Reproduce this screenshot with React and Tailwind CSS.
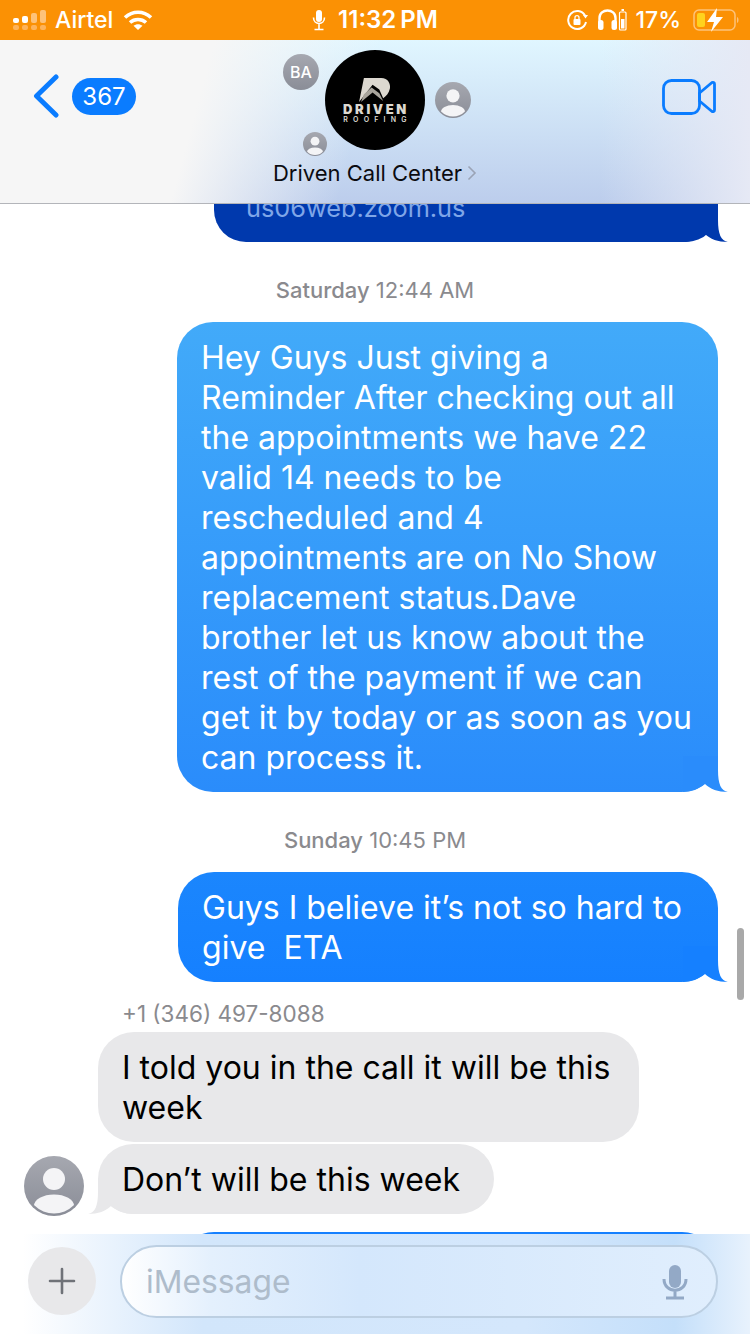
import React from 'react';

const outgoing = [
  'Hey Guys Just giving a',
  'Reminder After checking out all',
  'the appointments we have 22',
  'valid 14 needs to be',
  'rescheduled and 4',
  'appointments are on No Show',
  'replacement status.Dave',
  'brother let us know about the',
  'rest of the payment if we can',
  'get it by today or as soon as you',
  'can process it.',
];

const Tail = ({ fill, side = 'right' }) => (
  <svg
    width="45"
    height="36"
    viewBox="0 0 45 36"
    className={side === 'right' ? 'absolute -right-[10px] bottom-0' : 'absolute -left-[10px] bottom-0 -scale-x-100'}
  >
    <path d="M0 36C8 36 16 33 22 28C27 33 35 36 45 36C38 35 35 28 35 14V0H0Z" fill={fill} />
  </svg>
);

const Avatar = ({ size, id }) => (
  <svg width={size} height={size} viewBox="0 0 60 60" className="block">
    <defs>
      <linearGradient id={id} x1="0" y1="0" x2="0" y2="1">
        <stop offset="0" stopColor="#a6a8b0" />
        <stop offset="1" stopColor="#8a8d97" />
      </linearGradient>
      <clipPath id={`${id}-clip`}>
        <circle cx="30" cy="30" r="27.5" />
      </clipPath>
    </defs>
    <circle cx="30" cy="30" r="30" fill={`url(#${id})`} />
    <circle cx="30" cy="23" r="11" fill="#f4f4f6" />
    <ellipse cx="30" cy="50" rx="20" ry="11.5" fill="#f4f4f6" clipPath={`url(#${id}-clip)`} />
  </svg>
);

const Stamp = ({ day, time, className }) => (
  <div className={`h-[30px] self-center text-[22px] leading-[30px] text-[#8a8a8e] ${className}`}>
    <span className="font-medium">{day}</span> {time}
  </div>
);

const StatusBar = () => (
  <div className="h-[40px] shrink-0 grid grid-cols-3 items-center bg-[#fb9104] text-white text-[23px] font-medium">
    <div className="flex items-center pl-[13px]">
      <svg width="34" height="20" viewBox="0 0 34 20">
        <rect x="0" y="8" width="6" height="5" rx="2" fill="#fff" />
        <rect x="9" y="6" width="6" height="7" rx="2" fill="#fff" />
        <rect x="18" y="3" width="6" height="10" rx="2" fill="#fdc27a" />
        <rect x="27" y="0" width="6" height="13" rx="2" fill="#fdc27a" />
        <rect x="0" y="15" width="6" height="5" rx="2" fill="#fdb35b" />
        <rect x="9" y="15" width="6" height="5" rx="2" fill="#fdb35b" />
        <rect x="18" y="15" width="6" height="5" rx="2" fill="#fdb35b" />
        <rect x="27" y="15" width="6" height="5" rx="2" fill="#fdb35b" />
      </svg>
      <span className="ml-[8px]">Airtel</span>
      <svg width="30" height="22" viewBox="0 0 30 22" className="ml-[10px]" fill="none" stroke="#fff" strokeWidth="3.6">
        <path d="M2 8.500C9.500 1.500 20.500 1.500 28 8.500" />
        <path d="M7 13.500C11.500 9.500 18.500 9.500 23 13.500" />
        <path d="M15 21L10.500 16.800C13 14.600 17 14.600 19.500 16.800Z" fill="#fff" stroke="none" />
      </svg>
    </div>
    <div className="flex items-center justify-center">
      <svg width="14" height="22" viewBox="0 0 14 22" fill="none" stroke="#fff" strokeWidth="1.600" className="mr-[12px]">
        <rect x="4" y="1" width="6" height="12" rx="3" fill="#fff" stroke="none" />
        <path d="M1.500 8.500C1.500 16.500 12.500 16.500 12.500 8.500M7 15V20M2.500 20.500H11.500" />
      </svg>
      <span className="text-[24px] font-semibold [word-spacing:-2px]">11:32 PM</span>
    </div>
    <div className="flex items-center justify-end pr-[11px]">
      <svg width="24" height="22" viewBox="0 0 24 22" fill="none" stroke="#fff" strokeWidth="2">
        <path d="M19 6.500A9 9 0 1 0 20 13" />
        <path d="M17 6H22L19.500 9.500Z" fill="#fff" stroke="none" />
        <rect x="7.500" y="10" width="7" height="6" rx="1" fill="#fff" stroke="none" />
        <path d="M9 10V8.500C9 6 13 6 13 8.500V10" strokeWidth="1.300" />
      </svg>
      <svg width="30" height="24" viewBox="0 0 30 24" fill="none" stroke="#fff" strokeWidth="2.400" className="ml-[7px]">
        <path d="M2.500 17V10C2.500 0 18.500 0 18.500 10V17" />
        <rect x="1" y="12" width="5.500" height="10" rx="2.500" fill="#fff" stroke="none" />
        <rect x="14.500" y="12" width="5.500" height="10" rx="2.500" fill="#fff" stroke="none" />
        <rect x="22.500" y="4" width="6.500" height="18" rx="1" strokeWidth="1.200" />
        <rect x="24" y="11" width="3.500" height="9.500" fill="#fff" stroke="none" />
        <rect x="24.500" y="1" width="2.500" height="2" fill="#fff" stroke="none" />
      </svg>
      <span className="ml-[8px] mr-[12px]">17%</span>
      <svg width="46" height="24" viewBox="0 0 46 24" fill="none">
        <rect x="1" y="2" width="41" height="20" rx="5" stroke="#fdc27a" strokeWidth="1.500" />
        <rect x="4" y="5" width="8" height="14" rx="2" fill="#ffd21e" />
        <path d="M44 9V15C46 14.500 46 9.500 44 9Z" fill="#fdc27a" />
        <path d="M24 0L14 14H21L18 24L30 9H23Z" fill="#fff" />
      </svg>
    </div>
  </div>
);

const Header = () => (
  <div className="h-[164px] shrink-0 grid grid-cols-[1fr_240px_1fr] border-b border-[#b3b5ba] bg-[linear-gradient(105deg,#f6f6f6_0%,#f6f6f6_27%,transparent_48%),linear-gradient(90deg,transparent_80%,#e6e9f5_100%),linear-gradient(180deg,#e0f6ff_0%,#bccdec_100%)]">
    <div className="flex items-start pl-[33px] pt-[34px]">
      <svg width="27" height="44" viewBox="0 0 27 44" fill="none" stroke="#0a7cff" strokeWidth="5" strokeLinecap="round" strokeLinejoin="round">
        <path d="M23 3L3.500 22L23 41" />
      </svg>
      <div className="ml-[12px] mt-[4px] w-[64px] h-[37px] rounded-full bg-[#0a7cff] text-white text-[24px] leading-[37px] text-center">367</div>
    </div>

    <div className="relative flex flex-col items-center pt-[10px]">
      <div className="w-[100px] h-[100px] rounded-full bg-black flex flex-col items-center text-[#dcd8d0]">
        <svg width="33" height="26" viewBox="0 0 34 27" className="mt-[27px] -ml-[2px]">
          <path d="M6 1H24C31 1 34 7 33 12C32 17 29 20 26 22L22 13L15 8L1 26Z" fill="#dcd8d0" />
          <path d="M6 18L14 11L22 17L26 25L15 16L3 26Z" fill="#a8a49c" />
        </svg>
        <div className="text-[13px] leading-[13px] font-black tracking-[2.6px] pl-[2px]">DRIVEN</div>
        <div className="text-[7px] leading-[8px] font-semibold tracking-[5.2px] pl-[5px]">ROOFING</div>
      </div>
      <div className="absolute left-[28px] top-[14px] w-[36px] h-[36px] rounded-full bg-gradient-to-b from-[#a6a8b0] to-[#8a8d97] text-white text-[16px] leading-[36px] text-center font-medium">BA</div>
      <div className="absolute left-[180px] top-[42px]"><Avatar size={36} id="avatar-right" /></div>
      <div className="absolute left-[48px] top-[92px]"><Avatar size={24} id="avatar-small" /></div>
      <div className="mt-[8px] flex items-center text-[22px] leading-[30px] text-[#0b0b10]">
        Driven Call Center
        <svg width="10" height="16" viewBox="0 0 10 16" fill="none" stroke="#9aa3b5" strokeWidth="1.600" className="ml-[5px]">
          <path d="M1.500 1.500L8 8L1.500 14.500" />
        </svg>
      </div>
    </div>

    <div className="flex justify-end pt-[39px] pr-[34px]">
      <svg width="54" height="36" viewBox="0 0 54 36" fill="none" stroke="#0a7cff" strokeWidth="2.800" strokeLinejoin="round">
        <rect x="1.500" y="1.500" width="36" height="33" rx="8" />
        <path d="M37.500 14L50 3.500C51 3 52.500 3.500 52.500 5V31C52.500 32.500 51 33 50 32.500L37.500 22Z" />
      </svg>
    </div>
  </div>
);

const Thread = () => (
  <div className="relative flex-1 min-h-0 overflow-hidden bg-white flex flex-col">
    <div className="relative self-end mr-[32px] w-[504px] h-[38px] shrink-0 bg-[#0039ad] rounded-b-[32px]">
      <div className="absolute left-[32px] -top-[13px] text-[25.3px] leading-[34px] text-[#7fa6e8]">us06web.zoom.us</div>
      <Tail fill="#0039ad" />
    </div>

    <Stamp day="Saturday" time="12:44 AM" className="mt-[33px]" />

    <div className="relative self-end mr-[32px] mt-[17px] w-[541px] shrink-0 rounded-[36px] bg-gradient-to-b from-[#42aaf9] to-[#2a8cfb] pl-[24px] pr-[25px] pt-[16px] pb-[14px] text-white text-[32px] leading-[40px] whitespace-nowrap">
      {outgoing.map((line) => (
        <div key={line} className="relative z-10">{line}</div>
      ))}
      <Tail fill="#2a8cfb" />
    </div>

    <Stamp day="Sunday" time="10:45 PM" className="mt-[33px]" />

    <div className="relative self-end mr-[32px] mt-[17px] w-[540px] shrink-0 rounded-[36px] bg-gradient-to-b from-[#1b86fd] to-[#1580ff] pl-[24px] pr-[25px] pt-[16px] pb-[14px] text-white text-[32px] leading-[40px] whitespace-pre">
      <div className="relative z-10">Guys I believe it’s not so hard to</div>
      <div className="relative z-10">give  ETA</div>
      <Tail fill="#1580ff" />
    </div>

    <div className="mt-[17px] ml-[122px] h-[30px] text-[22.5px] leading-[30px] text-[#8a8a8e]">+1 (346) 497-8088</div>

    <div className="mt-[3px] ml-[98px] w-[541px] shrink-0 rounded-[36px] bg-[#e8e8ea] pl-[24px] pr-[25px] pt-[16px] pb-[14px] text-black text-[32px] leading-[40px]">
      <div className="whitespace-nowrap">I told you in the call it will be this</div>
      <div>week</div>
    </div>

    <div className="mt-[2px] ml-[24px] flex items-end gap-[14px] shrink-0">
      <div className="-mb-[2px]"><Avatar size={60} id="avatar-sender" /></div>
      <div className="relative w-[396px] rounded-[35px] bg-[#e8e8ea] pl-[24px] pt-[16px] pb-[14px] text-black text-[32px] leading-[40px] whitespace-nowrap">
        <span className="relative z-10">Don’t will be this week</span>
        <Tail fill="#e8e8ea" side="left" />
      </div>
    </div>

    <div className="self-end mt-[18px] mr-[32px] w-[540px] h-[40px] shrink-0 rounded-t-[36px] bg-[#1580ff]" />

    {/* scroll indicator */}
    <div className="absolute right-[6px] top-[724px] w-[7px] h-[72px] rounded-full bg-[#a9a9a9]" />
  </div>
);

const Composer = () => (
  <div className="relative h-[100px] shrink-0 flex items-start pl-[28px] pt-[11px] bg-[linear-gradient(90deg,#ffffff_3%,#d2e6fb_27%,#d4e7fc_70%,#c4dffa_90%,#e8f2fd_100%)]">
    <div className="mt-[2px] w-[68px] h-[68px] rounded-full bg-[#e8e8ea] flex items-center justify-center">
      <svg width="28" height="28" viewBox="0 0 28 28" stroke="#6f7278" strokeWidth="2.600" strokeLinecap="round">
        <path d="M14 2V26M2 14H26" />
      </svg>
    </div>
    <div className="ml-[24px] w-[598px] h-[73px] rounded-full border-2 border-[#bccfe2] bg-[linear-gradient(90deg,#ffffff_0%,#e4f0fd_15%,#d4e7fc_40%,#e0eefd_100%)] flex items-center justify-between pl-[24px] pr-[28px]">
      <span className="text-[31.8px] text-[#aebccb]">iMessage</span>
      <svg width="26" height="36" viewBox="0 0 26 36" fill="none" stroke="#93a9c6" strokeWidth="3">
        <rect x="7" y="1" width="12" height="23" rx="6" fill="#93a9c6" stroke="none" />
        <path d="M2 15C2 30 24 30 24 15M13 27V33M4 34H22" />
      </svg>
    </div>
  </div>
);

const App = () => {
  return (
    <div className="w-[750px] h-[1334px] flex flex-col overflow-hidden bg-white font-['Inter',sans-serif]">
      <StatusBar />
      <Header />
      <Thread />
      <Composer />
    </div>
  );
};

export default App;
